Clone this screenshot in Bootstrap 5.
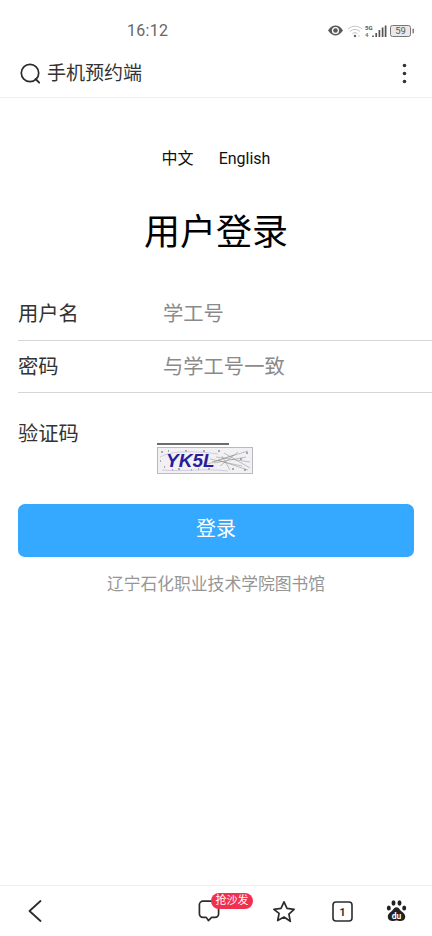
<!DOCTYPE html>
<html lang="zh-CN">
<head>
  <meta charset="UTF-8" />
  <meta name="viewport" content="width=device-width, initial-scale=1.0"/>
  <title>手机预约端</title>
  <link href="https://cdn.jsdelivr.net/npm/bootstrap@5.3.0/dist/css/bootstrap.min.css" rel="stylesheet"/>
  <style>
    body {
      font-family: "Roboto", "Noto Sans CJK SC", sans-serif;
      background: #fff;
      color: #222;
    }
    .phone { width: 432px; height: 936px; overflow: hidden; }

    .status-row { height: 50px; padding: 21px 17px 0 127px; }
    .clock { font-size: 16px; line-height: 20px; color: #666; letter-spacing: .3px; }
    .status-row svg { display: block; margin-top: 2px; }

    .top-row { height: 48px; padding: 0 25px 0 20px; border-bottom: 1px solid #eee; }
    .top-title { font-size: 19px; line-height: 24px; color: #333; margin-left: 6px; }

    .lang-row { padding-top: 50px; font-size: 16px; line-height: 22px; color: #111; gap: 25px; }
    .login-title { font-size: 36px; line-height: 48px; font-weight: 400; color: #000; margin: 39px 0 31px; }

    .field-row { margin-left: 18px; height: 52.5px; border-bottom: 1.5px solid #d6d6d6; }
    .field-row + .field-row { padding-top: 2px; }
    .field-label { width: 145px; font-size: 20.3px; line-height: 26px; color: #333; }
    .field-input {
      border: 0; outline: 0; padding: 0; flex: 1; min-width: 0;
      font-size: 20.3px; line-height: 26px; background: transparent;
    }
    .field-input::placeholder { color: #8a8a8a; opacity: 1; }

    .code-row { margin-left: 18px; height: 111px; padding-top: 28px; }
    .code-label { width: 139px; font-size: 20.3px; line-height: 26px; color: #333; }
    .code-line { width: 72px; height: 2px; background: #6b6b6b; margin-top: 22px; }
    .code-pic {
      width: 96px; height: 27px; margin-top: 2px; position: relative; overflow: hidden;
      border: 1px solid #b9b9c4; background: #f1f0f2;
    }
    .code-pic svg { position: absolute; inset: 0; }
    .code-text {
      position: absolute; left: 8px; top: 0; font: italic 700 19px/25px "Liberation Sans", sans-serif;
      color: #2a1c9c;
    }

    .btn-login {
      display: block; width: 396px; height: 53px; margin-left: 18px; padding: 0 0 4px;
      background: #35a8ff; border: 0; border-radius: 7px;
      color: #fff; font-size: 20px;
    }
    .btn-login:hover { background: #35a8ff; color: #fff; }
    .school { font-size: 16.8px; line-height: 24px; color: #969696; margin-top: 15px; }

    .bottom-row {
      position: fixed; left: 0; bottom: 0; width: 432px; height: 51px;
      border-top: 1px solid #eee; background: #fff;
    }
    .tool-slot { position: relative; }
    .sofa-tag {
      position: absolute; left: 13px; top: -7px; width: 42px; height: 16px;
      border-radius: 8px; background: #f0304f; color: #fff;
      font-size: 11px; line-height: 16px; text-align: center; white-space: nowrap;
    }
  </style>
</head>
<body>
<div class="phone d-flex flex-column">

  <!-- status bar -->
  <div class="status-row d-flex justify-content-between align-items-start">
    <span class="clock">16:12</span>
    <svg width="88" height="16" viewBox="0 0 88 16">
      <path d="M1 7.5C3.5 3.8 6 2.6 8.5 2.6S13.5 3.8 16 7.5C13.5 11.2 11 12.4 8.5 12.4S3.5 11.2 1 7.5Z" fill="#5a5a5a"/>
      <circle cx="8.5" cy="7.5" r="3.6" fill="#fff"/><circle cx="8.5" cy="7.5" r="2.3" fill="#5a5a5a"/>
      <path d="M21 6C25 2.4 31 2.4 35 6M23 8.4C26 5.8 30 5.8 33 8.4M25.4 10.6C27 9.4 29 9.4 30.6 10.6" fill="none" stroke="#c4c4c4" stroke-width="1"/>
      <circle cx="28" cy="13" r="1.2" fill="#666"/>
      <circle cx="32" cy="13" r=".7" fill="#bbb"/>
      <text x="38" y="6.5" font-family="Roboto, sans-serif" font-size="6" font-weight="700" fill="#555">5G</text>
      <text x="38" y="14" font-family="Roboto, sans-serif" font-size="6" font-weight="700" fill="#777">4</text>
      <path d="M46 14v-1.5M49.2 14v-4M52.4 14V7M55.6 14V4.5M58.6 14V2.5" stroke="#555" stroke-width="1.7" fill="none"/>
      <rect x="63.5" y="2.5" width="20" height="11" rx="2" fill="#e9e9e9" stroke="#777"/>
      <text x="73.5" y="11.4" text-anchor="middle" font-family="Roboto, sans-serif" font-size="9.5" fill="#555">59</text>
      <rect x="85.5" y="5.5" width="1.4" height="5" rx=".7" fill="#777"/>
    </svg>
  </div>

  <!-- browser top bar -->
  <div class="top-row d-flex align-items-center">
    <svg width="21" height="21" viewBox="0 0 21 21">
      <circle cx="10" cy="10" r="8.7" fill="none" stroke="#2a2a2a" stroke-width="1.7"/>
      <path d="M15.6 16l3.6 3.7" stroke="#2a2a2a" stroke-width="1.8" stroke-linecap="round"/>
    </svg>
    <span class="top-title">手机预约端</span>
    <svg class="ms-auto" width="5" height="21" viewBox="0 0 5 21">
      <circle cx="2.5" cy="2.5" r="1.8" fill="#333"/><circle cx="2.5" cy="10.5" r="1.8" fill="#333"/><circle cx="2.5" cy="18.5" r="1.8" fill="#333"/>
    </svg>
  </div>

  <div class="lang-row d-flex justify-content-center">
    <span>中文</span>
    <span>English</span>
  </div>

  <h1 class="login-title text-center">用户登录</h1>

  <form>
    <div class="field-row d-flex align-items-center">
      <label class="field-label" for="xh">用户名</label>
      <input class="field-input" id="xh" type="text" placeholder="学工号">
    </div>
    <div class="field-row d-flex align-items-center">
      <label class="field-label" for="mm">密码</label>
      <input class="field-input" id="mm" type="text" placeholder="与学工号一致">
    </div>
    <div class="code-row d-flex">
      <span class="code-label">验证码</span>
      <div>
        <div class="code-line"></div>
        <div class="code-pic">
          <svg width="94" height="25" viewBox="0 0 94 25">
            <path d="M54 14L90 3M56 15L88 9M52 11L84 18M58 9L92 14M62 18L80 4M66 5L92 20M50 16L76 7M60 12L90 22M64 8L72 22" stroke="#8d8d8d" stroke-width=".5" fill="none"/>
            <path d="M3 4h2M10 3h1M20 21h2M33 22h1M45 3h2M6 19h1M50 21h2M74 21h2M86 22h2M88 5h2M2 13h1M60 3h2M14 22h1M27 3h2M40 21h1M82 11h2" stroke="#5d5d78" stroke-width="1" fill="none"/>
            <path d="M2 9C14 2 40 3 60 6M4 22C24 24 46 20 70 23" stroke="#c9b9d6" stroke-width=".7" fill="none"/>
          </svg>
          <span class="code-text">YK5L</span>
        </div>
      </div>
    </div>
    <button class="btn btn-login" type="button">登录</button>
  </form>

  <div class="school text-center">辽宁石化职业技术学院图书馆</div>

  <!-- browser bottom bar -->
  <div class="bottom-row d-flex align-items-center">
    <svg class="d-block" style="margin-left:28px" width="14" height="22" viewBox="0 0 14 22">
      <path d="M12.5 1L1.5 11 12.5 21" fill="none" stroke="#2c2c2c" stroke-width="1.8" stroke-linecap="round" stroke-linejoin="round"/>
    </svg>
    <div class="tool-slot ms-auto" style="margin-right:52px">
      <svg class="d-block" width="22" height="22" viewBox="0 0 22 22">
        <path d="M5 1.2h12a3.6 3.6 0 0 1 3.6 3.6v9a3.6 3.6 0 0 1-3.6 3.6h-3.4l-3.2 3.2-2.1-3.2H5a3.6 3.6 0 0 1-3.6-3.6v-9A3.6 3.6 0 0 1 5 1.2Z" fill="none" stroke="#2c2c2c" stroke-width="1.7" stroke-linejoin="round"/>
      </svg>
      <span class="sofa-tag">抢沙发</span>
    </div>
    <svg class="d-block" style="margin-right:36px" width="24" height="23" viewBox="0 0 24 23">
      <path d="M12 1.8l3 6.6 7.1.9-5.2 4.9 1.4 7.1L12 17l-6.3 3.5 1.4-7.1L1.9 9.3 9 8.4Z" fill="none" stroke="#2c2c2c" stroke-width="1.7" stroke-linejoin="round"/>
    </svg>
    <svg class="d-block" style="margin-right:33px" width="21" height="21" viewBox="0 0 21 21">
      <rect x="1" y="1" width="19" height="19" rx="3" fill="none" stroke="#2c2c2c" stroke-width="1.6"/>
      <text x="10.5" y="14.6" text-anchor="middle" font-family="Roboto, sans-serif" font-size="10.5" font-weight="700" fill="#2c2c2c">1</text>
    </svg>
    <svg class="d-block" style="margin-right:25px" width="21" height="22" viewBox="0 0 21 22">
      <ellipse cx="2.8" cy="8" rx="2" ry="2.6" fill="#222"/>
      <ellipse cx="7.5" cy="3" rx="2" ry="2.7" fill="#222"/>
      <ellipse cx="13.5" cy="3" rx="2" ry="2.7" fill="#222"/>
      <ellipse cx="18.2" cy="8" rx="2" ry="2.6" fill="#222"/>
      <path d="M10.5 7.2c2.6 0 3.4 3 5.6 4.6 2.8 2 3.4 4 3 6-.5 2.4-2.8 3.4-5 3.2-1.5-.1-2.5-.5-3.6-.5s-2.1.4-3.6.5c-2.2.2-4.5-.8-5-3.2-.4-2 .2-4 3-6 2.2-1.6 3-4.6 5.6-4.6Z" fill="#222"/>
      <text x="10.5" y="18.6" text-anchor="middle" font-family="Roboto, sans-serif" font-size="8.5" font-weight="700" fill="#fff">du</text>
    </svg>
  </div>
</div>

<script src="https://cdn.jsdelivr.net/npm/bootstrap@5.3.0/dist/js/bootstrap.bundle.min.js"></script>
</body>
</html>
